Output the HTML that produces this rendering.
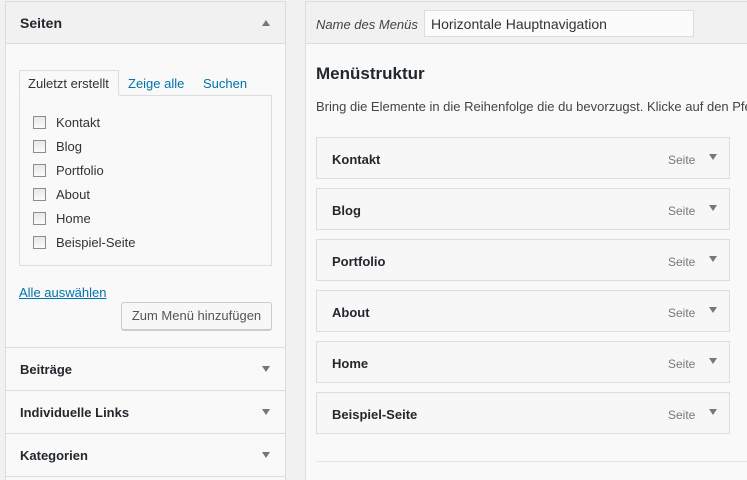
<!DOCTYPE html>
<html style="height:480px;overflow:hidden"><head><meta charset="utf-8"><style>
*{box-sizing:border-box;margin:0;padding:0}
body{width:747px;height:480px;overflow:hidden;background:#f1f1f1;font-family:"Liberation Sans",sans-serif;font-size:13px;color:#333;position:relative}
.abs{position:absolute}
.lp{left:5px;top:1px;width:281px;height:479px;border:1px solid #ddd;border-bottom:none;background:#f9f9f9}
.tri{width:0;height:0;border-left:4px solid transparent;border-right:4px solid transparent}
.down{border-top:6px solid #777}
.up{border-bottom:6px solid #777}
.b{font-weight:bold;color:#23282d}
.cb{width:13px;height:13px;border:1px solid #8c8c8c;background:linear-gradient(#e8e8e8,#fafafa)}
.item{left:316px;width:414px;height:42px;border:1px solid #ddd;background:#f7f7f7}
.item .t{position:absolute;left:15px;top:14px;font-weight:bold;color:#23282d;font-size:13px}
.item .s{position:absolute;left:351px;top:15px;font-size:12px;color:#777}
.item .tri{position:absolute;left:392px;top:16px}
</style></head><body>
<div class="abs lp"></div>
<div class="abs" style="left:6px;top:2px;width:279px;height:42px;background:#f1f1f1;border-bottom:1px solid #ddd"></div>
<div class="abs b" style="left:20px;top:15px;font-size:14px">Seiten</div>
<div class="abs tri up" style="left:262px;top:20px"></div>
<div class="abs" style="left:19px;top:95px;width:253px;height:171px;border:1px solid #ddd"></div>
<div class="abs" style="left:19px;top:70px;width:100px;height:26px;border:1px solid #ddd;border-bottom:1px solid #f9f9f9;background:#f9f9f9"></div>
<div class="abs" style="left:28px;top:76px;color:#333">Zuletzt erstellt</div>
<div class="abs" style="left:128px;top:76px;color:#0073aa">Zeige alle</div>
<div class="abs" style="left:203px;top:76px;color:#0073aa">Suchen</div>
<div class="abs cb" style="left:33px;top:116px"></div><div class="abs" style="left:56px;top:115px">Kontakt</div>
<div class="abs cb" style="left:33px;top:140px"></div><div class="abs" style="left:56px;top:139px">Blog</div>
<div class="abs cb" style="left:33px;top:164px"></div><div class="abs" style="left:56px;top:163px">Portfolio</div>
<div class="abs cb" style="left:33px;top:188px"></div><div class="abs" style="left:56px;top:187px">About</div>
<div class="abs cb" style="left:33px;top:212px"></div><div class="abs" style="left:56px;top:211px">Home</div>
<div class="abs cb" style="left:33px;top:236px"></div><div class="abs" style="left:56px;top:235px">Beispiel-Seite</div>
<div class="abs" style="left:19px;top:285px;color:#0073aa;text-decoration:underline">Alle auswählen</div>
<div class="abs" style="left:121px;top:302px;width:151px;height:28px;border:1px solid #ccc;border-radius:3px;background:#f7f7f7;box-shadow:0 1px 0 #ccc;text-align:center;line-height:26px;color:#555">Zum Menü hinzufügen</div>
<div class="abs" style="left:6px;top:347px;width:279px;border-top:1px solid #ddd"></div>
<div class="abs b" style="left:20px;top:362px">Beiträge</div><div class="abs tri down" style="left:262px;top:366px"></div>
<div class="abs" style="left:6px;top:390px;width:279px;border-top:1px solid #ddd"></div>
<div class="abs b" style="left:20px;top:405px">Individuelle Links</div><div class="abs tri down" style="left:262px;top:409px"></div>
<div class="abs" style="left:6px;top:433px;width:279px;border-top:1px solid #ddd"></div>
<div class="abs b" style="left:20px;top:448px">Kategorien</div><div class="abs tri down" style="left:262px;top:452px"></div>
<div class="abs" style="left:6px;top:476px;width:279px;border-top:1px solid #ddd"></div>

<div class="abs" style="left:305px;top:1px;width:450px;height:479px;border:1px solid #ddd;border-bottom:none;background:#f9f9f9"></div>
<div class="abs" style="left:306px;top:2px;width:441px;height:42px;background:#f1f1f1;border-bottom:1px solid #ddd"></div>
<div class="abs" style="left:316px;top:17px;font-style:italic;color:#444">Name des Menüs</div>
<div class="abs" style="left:424px;top:10px;width:270px;height:27px;border:1px solid #ddd;background:#fbfbfb;padding:5px 6px;font-size:14px;color:#333">Horizontale Hauptnavigation</div>
<div class="abs b" style="left:316px;top:64px;font-size:17px">Menüstruktur</div>
<div class="abs" style="left:316px;top:99px;white-space:nowrap;color:#444">Bring die Elemente in die Reihenfolge die du bevorzugst. Klicke auf den Pfeil</div>
<div class="abs item" style="top:137px"><span class="t">Kontakt</span><span class="s">Seite</span><span class="tri down"></span></div>
<div class="abs item" style="top:188px"><span class="t">Blog</span><span class="s">Seite</span><span class="tri down"></span></div>
<div class="abs item" style="top:239px"><span class="t">Portfolio</span><span class="s">Seite</span><span class="tri down"></span></div>
<div class="abs item" style="top:290px"><span class="t">About</span><span class="s">Seite</span><span class="tri down"></span></div>
<div class="abs item" style="top:341px"><span class="t">Home</span><span class="s">Seite</span><span class="tri down"></span></div>
<div class="abs item" style="top:392px"><span class="t">Beispiel-Seite</span><span class="s">Seite</span><span class="tri down"></span></div>
<div class="abs" style="left:316px;top:461px;width:431px;border-top:1px solid #e5e5e5"></div>
</body></html>
